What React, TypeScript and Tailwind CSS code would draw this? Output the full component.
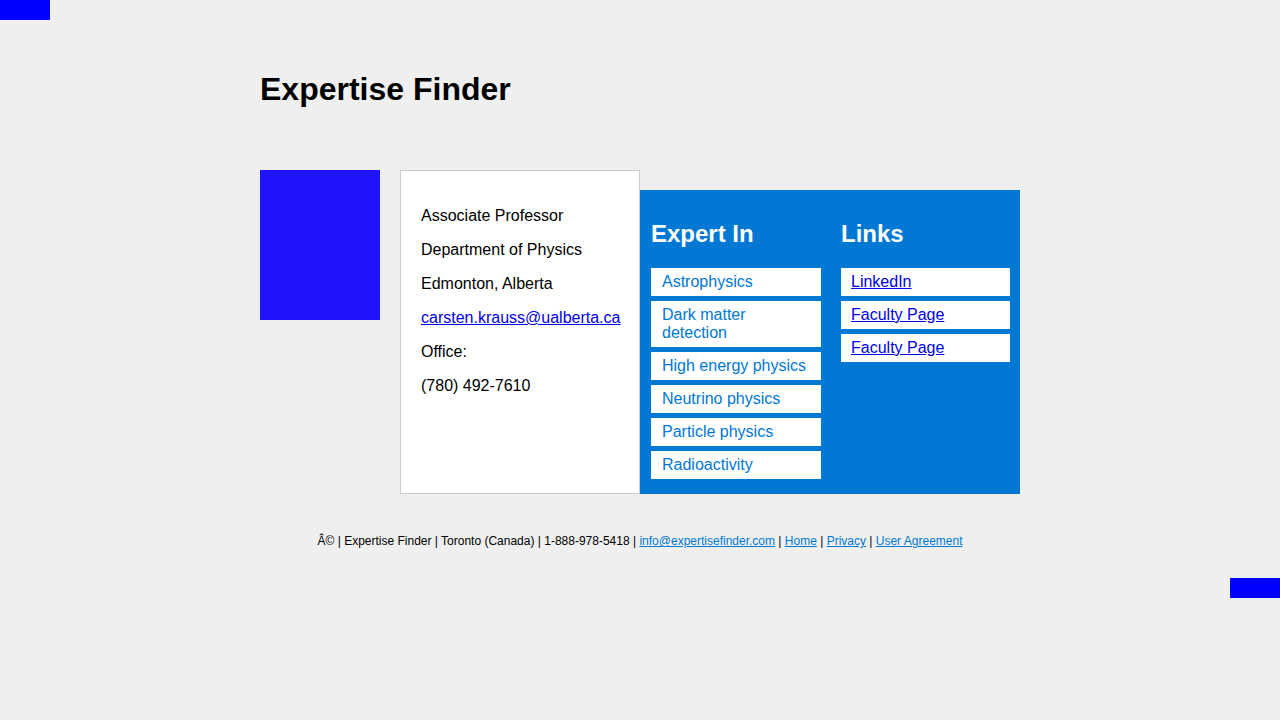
import React from "react";

const expertise = [
  "Astrophysics",
  "Dark matter detection",
  "High energy physics",
  "Neutrino physics",
  "Particle physics",
  "Radioactivity",
];

const links = ["LinkedIn", "Faculty Page", "Faculty Page"];

export default function App() {
  return (
    <div
      className="min-h-screen bg-[#efefef] text-black"
      style={{ fontFamily: '"Liberation Sans", Arial, sans-serif' }}
    >
      <div className="h-[20px] w-[50px] bg-[#0000ff]" />
      <div className="mx-auto w-[760px]">
        <h1 className="mt-[51px] text-[32px] leading-[37px] font-bold">Expertise Finder</h1>
        <div className="mt-[62px] flex items-stretch">
          <div className="h-[150px] w-[120px] shrink-0 self-start bg-[#1f14f9]" />
          <div className="ml-[20px] w-[240px] shrink-0 border border-[#cccccc] bg-white px-[20px] pt-[20px]">
            <div className="mt-[16px] flex flex-col gap-[16px] text-[16px] leading-[18px]">
              <p>Associate Professor</p>
              <p>Department of Physics</p>
              <p>Edmonton, Alberta</p>
              <p>
                <a href="#" className="whitespace-nowrap text-[#0000ee] underline">
                  carsten.krauss@ualberta.ca
                </a>
              </p>
              <p>Office:</p>
              <p>(780) 492-7610</p>
            </div>
          </div>
          <div className="mt-[20px] flex w-[380px] shrink-0 gap-[20px] self-start bg-[#0078d4] pt-[10px] pr-[10px] pb-[15px] pl-[11px]">
            <div className="w-[170px]">
              <h2 className="mt-[20px] mb-[20px] text-[24px] leading-[28px] font-bold text-white">Expert In</h2>
              <div className="flex flex-col gap-[5px]">
                {expertise.map((e) => (
                  <div
                    key={e}
                    className="bg-white py-[5px] pr-[11px] pl-[11px] text-[16px] leading-[18px] text-[#0078d4]"
                  >
                    {e}
                  </div>
                ))}
              </div>
            </div>
            <div className="w-[169px]">
              <h2 className="mt-[20px] mb-[20px] text-[24px] leading-[28px] font-bold text-white">Links</h2>
              <div className="flex flex-col gap-[5px]">
                {links.map((l, i) => (
                  <div key={i} className="bg-white py-[5px] pl-[10px] text-[16px] leading-[18px]">
                    <a href="#" className="text-[#0000ee] underline">
                      {l}
                    </a>
                  </div>
                ))}
              </div>
            </div>
          </div>
        </div>
        <p className="mt-[40px] text-center text-[12px] leading-[14px]">
          Â© | Expertise Finder | Toronto (Canada) | 1-888-978-5418 |{" "}
          <a href="#" className="text-[#0078d4] underline">info@expertisefinder.com</a> |{" "}
          <a href="#" className="text-[#0078d4] underline">Home</a> |{" "}
          <a href="#" className="text-[#0078d4] underline">Privacy</a> |{" "}
          <a href="#" className="text-[#0078d4] underline">User Agreement</a>
        </p>
      </div>
      <div className="mt-[30px] flex justify-end">
        <div className="h-[20px] w-[50px] bg-[#0000ff]" />
      </div>
    </div>
  );
}
